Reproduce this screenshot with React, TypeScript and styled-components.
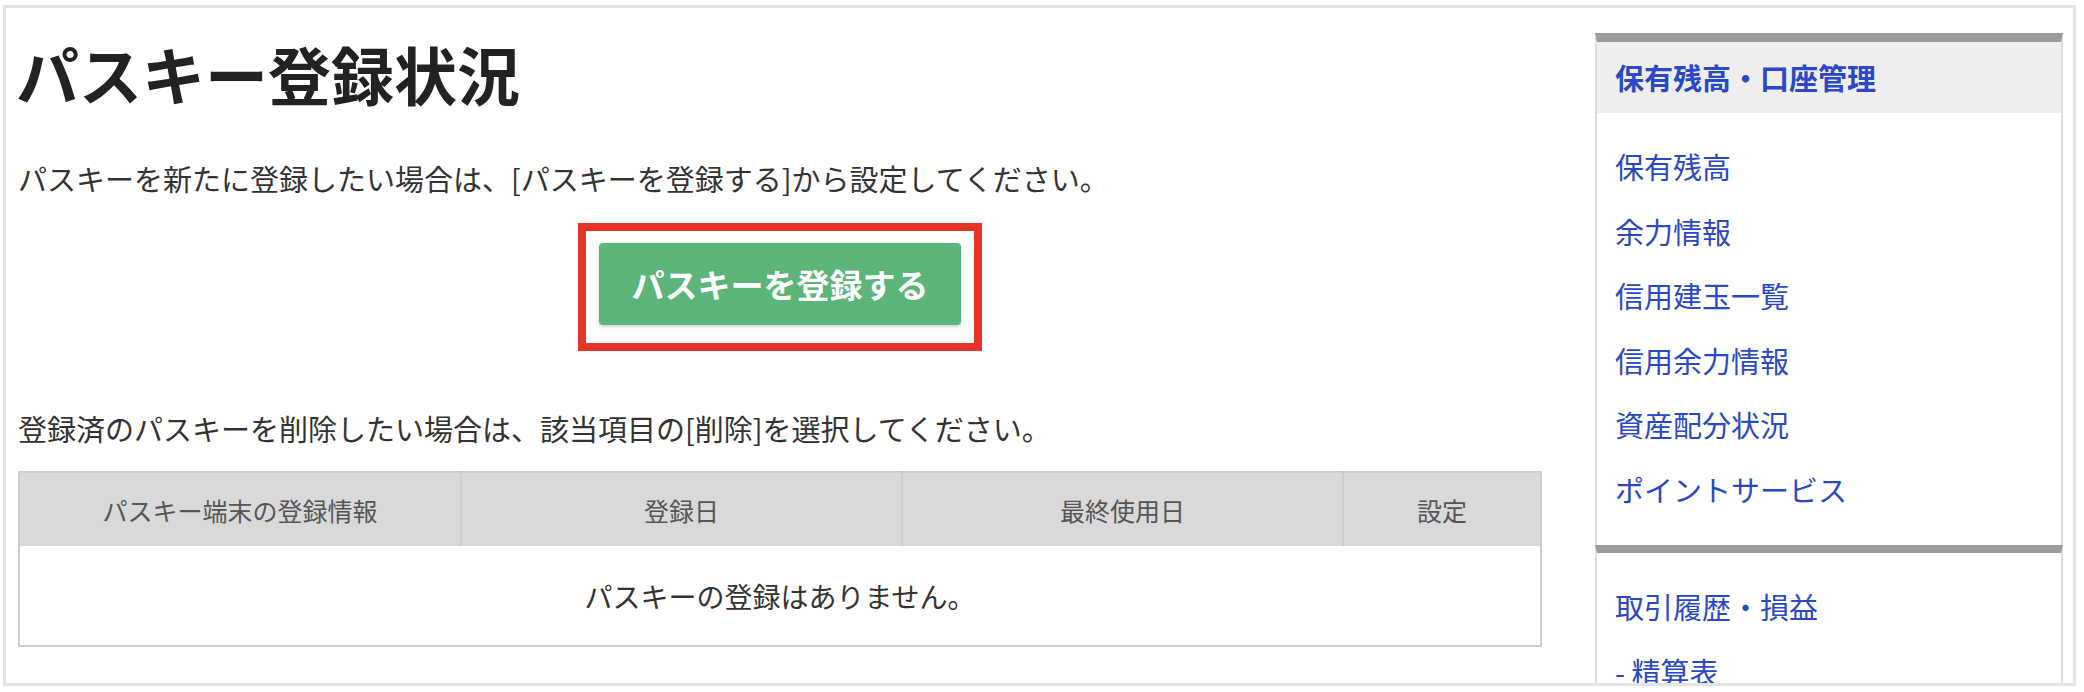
import React from "react";
import styled, { createGlobalStyle } from "styled-components";

const GlobalStyle = createGlobalStyle`
  html, body { margin: 0; padding: 0; background: #ffffff; }
  body {
    font-family: "Noto Sans CJK JP", "Noto Sans", sans-serif;
    color: #333333;
  }
  * { box-sizing: border-box; }
`;

const Frame = styled.div`
  margin: 5px 8px 0 3px;
  height: 681px;
  border: 3px solid #e4e4e4;
  padding: 0 12px;
  display: flex;
  align-items: flex-start;
  overflow: hidden;
`;

const Main = styled.main`
  flex: 0 0 1522px;
  display: flex;
  flex-direction: column;
  padding-top: 28px;
`;

const Title = styled.h1`
  margin: 0 0 0 -2px;
  font-size: 63px;
  line-height: 74px;
  font-weight: 700;
  color: #222222;
  letter-spacing: 0;
`;

const Para = styled.p<{ $gap: number }>`
  margin: ${(p) => p.$gap}px 0 0;
  font-size: 29px;
  line-height: 40px;
  color: #333333;
`;

const ButtonRow = styled.div`
  display: flex;
  justify-content: center;
  margin-top: 25px;
`;

const Highlight = styled.div`
  border: 8px solid #e5342a;
  padding: 12px 13px 18px;
`;

const RegisterButton = styled.button`
  width: 362px;
  height: 82px;
  border: none;
  border-radius: 4px;
  background: #5bb579;
  color: #ffffff;
  font-family: "Noto Sans CJK JP", sans-serif;
  font-size: 33px;
  font-weight: 700;
  box-shadow: 0 2px 3px rgba(0, 0, 0, 0.18);
  cursor: pointer;
`;

const Table = styled.table`
  margin-top: 23px;
  width: 1522px;
  border-collapse: collapse;
  table-layout: fixed;
  border: 2px solid #cfcfcf;
`;

const Th = styled.th<{ $w: number }>`
  width: ${(p) => p.$w}px;
  height: 74px;
  background: #d9d9d9;
  color: #555555;
  font-size: 25px;
  font-weight: 400;
  text-align: center;
  border-left: 2px solid #cdcdcd;
  &:first-child { border-left: none; }
`;

const EmptyCell = styled.td`
  height: 100px;
  text-align: center;
  font-size: 28px;
  color: #333333;
  background: #ffffff;
`;

const Sidebar = styled.aside`
  flex: 0 0 468px;
  margin-left: 53px;
  margin-top: 25px;
  display: flex;
  flex-direction: column;
`;

const Section = styled.section<{ $bar: number }>`
  border-top: ${(p) => p.$bar}px solid #9b9b9b;
  border-left: 2px solid #dddddd;
  border-right: 2px solid #dddddd;
`;

const SectionHead = styled.div`
  background: #eeeeee;
  height: 71px;
  line-height: 71px;
  padding-left: 18px;
  font-size: 29px;
  font-weight: 700;
  color: #2b48c9;
`;

const LinkList = styled.ul<{ $bottom: number }>`
  list-style: none;
  margin: 0;
  padding: 21px 0 ${(p) => p.$bottom}px 18px;
`;

const LinkItem = styled.li`
  font-size: 29px;
  line-height: 64.5px;
  color: #2b48c9;
  white-space: nowrap;
`;

const columns = [
  { label: "パスキー端末の登録情報", w: 442 },
  { label: "登録日", w: 441 },
  { label: "最終使用日", w: 441 },
  { label: "設定", w: 198 },
];

const accountLinks = [
  "保有残高",
  "余力情報",
  "信用建玉一覧",
  "信用余力情報",
  "資産配分状況",
  "ポイントサービス",
];

const historyLinks = ["取引履歴・損益", "- 精算表"];

export default function App() {
  return (
    <>
      <GlobalStyle />
      <Frame>
        <Main>
          <Title>パスキー登録状況</Title>
          <Para $gap={48}>
            パスキーを新たに登録したい場合は、[パスキーを登録する]から設定してください。
          </Para>
          <ButtonRow>
            <Highlight>
              <RegisterButton>パスキーを登録する</RegisterButton>
            </Highlight>
          </ButtonRow>
          <Para $gap={57}>
            登録済のパスキーを削除したい場合は、該当項目の[削除]を選択してください。
          </Para>
          <Table>
            <thead>
              <tr>
                {columns.map((c) => (
                  <Th key={c.label} $w={c.w}>
                    {c.label}
                  </Th>
                ))}
              </tr>
            </thead>
            <tbody>
              <tr>
                <EmptyCell colSpan={4}>パスキーの登録はありません。</EmptyCell>
              </tr>
            </tbody>
          </Table>
        </Main>
        <Sidebar>
          <Section $bar={9}>
            <SectionHead>保有残高・口座管理</SectionHead>
            <LinkList $bottom={24}>
              {accountLinks.map((l) => (
                <LinkItem key={l}>{l}</LinkItem>
              ))}
            </LinkList>
          </Section>
          <Section $bar={8}>
            <LinkList $bottom={24}>
              {historyLinks.map((l) => (
                <LinkItem key={l}>{l}</LinkItem>
              ))}
            </LinkList>
          </Section>
        </Sidebar>
      </Frame>
    </>
  );
}
